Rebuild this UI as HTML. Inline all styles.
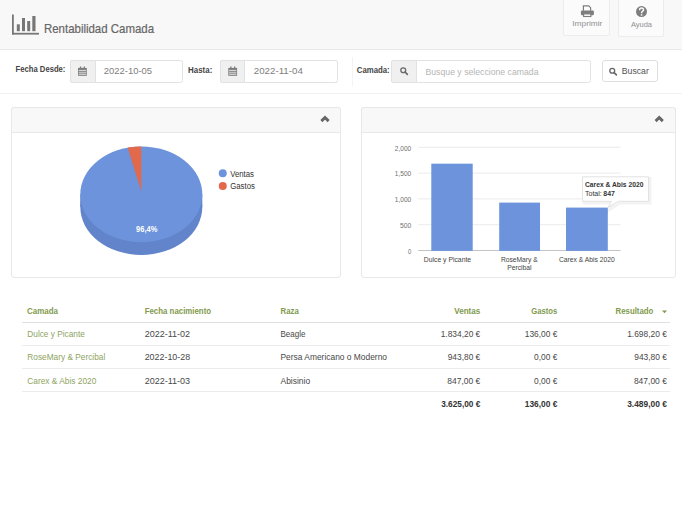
<!DOCTYPE html>
<html><head><meta charset="utf-8"><title>Rentabilidad Camada</title>
<style>
html,body{margin:0;padding:0;background:#fff;width:682px;height:518px;overflow:hidden;font-family:"Liberation Sans", sans-serif;}
#root{position:relative;width:682px;height:518px;overflow:hidden;}
svg{position:absolute;left:0;top:0;}
svg text{font-family:"Liberation Sans", sans-serif;}
</style></head><body><div id="root">
<div style="position:absolute;left:0px;top:0px;width:682px;height:50px;box-sizing:border-box;background:#f8f8f8;border-bottom:1px solid #e8e8e8;"></div>
<div style="position:absolute;left:563px;top:-3px;width:47px;height:39px;box-sizing:border-box;background:#fbfbfb;border:1px solid #ececec;border-radius:2px;"></div>
<div style="position:absolute;left:618px;top:-3px;width:46px;height:40px;box-sizing:border-box;background:#fbfbfb;border:1px solid #ececec;border-radius:2px;"></div>
<div style="position:absolute;left:0px;top:93px;width:682px;height:1px;box-sizing:border-box;background:#f2f2f2;"></div>
<div style="position:absolute;left:70px;top:60px;width:112.5px;height:22.5px;box-sizing:border-box;background:#fff;border:1px solid #e2e2e2;border-radius:2.5px;"></div>
<div style="position:absolute;left:70px;top:60px;width:26px;height:22.5px;box-sizing:border-box;background:#f0f0f0;border:1px solid #e2e2e2;border-radius:2px 0 0 2px;"></div>
<div style="position:absolute;left:220.3px;top:60px;width:117.89999999999998px;height:22.5px;box-sizing:border-box;background:#fff;border:1px solid #e2e2e2;border-radius:2.5px;"></div>
<div style="position:absolute;left:220.3px;top:60px;width:25.2px;height:22.5px;box-sizing:border-box;background:#f0f0f0;border:1px solid #e2e2e2;border-radius:2px 0 0 2px;"></div>
<div style="position:absolute;left:352px;top:57px;width:1px;height:29px;box-sizing:border-box;background:#f3f3f3;"></div>
<div style="position:absolute;left:391.4px;top:60px;width:199.20000000000005px;height:22.5px;box-sizing:border-box;background:#fff;border:1px solid #e2e2e2;border-radius:2.5px;"></div>
<div style="position:absolute;left:391.4px;top:60px;width:25.2px;height:22.5px;box-sizing:border-box;background:#f0f0f0;border:1px solid #e2e2e2;border-radius:2px 0 0 2px;"></div>
<div style="position:absolute;left:601.5px;top:60.2px;width:56px;height:21.8px;box-sizing:border-box;background:#fff;border:1px solid #dedede;border-radius:3px;"></div>
<div style="position:absolute;left:11px;top:107px;width:330px;height:171px;box-sizing:border-box;background:#fff;border:1px solid #e8e8e8;border-radius:3px;"></div>
<div style="position:absolute;left:11px;top:107px;width:330px;height:26px;box-sizing:border-box;background:#f8f8f8;border:1px solid #e8e8e8;border-radius:3px 3px 0 0;"></div>
<div style="position:absolute;left:361px;top:107px;width:314.5px;height:171px;box-sizing:border-box;background:#fff;border:1px solid #e8e8e8;border-radius:3px;"></div>
<div style="position:absolute;left:361px;top:107px;width:314.5px;height:26px;box-sizing:border-box;background:#f8f8f8;border:1px solid #e8e8e8;border-radius:3px 3px 0 0;"></div>
<div style="position:absolute;left:21.6px;top:321.6px;width:648px;height:1.5px;box-sizing:border-box;background:#e0e0e0;"></div>
<div style="position:absolute;left:21.6px;top:344.6px;width:648px;height:1px;box-sizing:border-box;background:#ececec;"></div>
<div style="position:absolute;left:21.6px;top:367.6px;width:648px;height:1px;box-sizing:border-box;background:#ececec;"></div>
<div style="position:absolute;left:21.6px;top:390.6px;width:648px;height:1px;box-sizing:border-box;background:#ececec;"></div>
<svg width="682" height="518" viewBox="0 0 682 518">
<g fill="#777"><rect x="12" y="14.5" width="1.8" height="20"/><rect x="12" y="32.8" width="27" height="1.8"/><rect x="16.8" y="24.3" width="3" height="6.9"/><rect x="22" y="18" width="3" height="13.2"/><rect x="27.2" y="21" width="3" height="10.2"/><rect x="32.3" y="16" width="3.2" height="15.2"/></g>
<g fill="none" stroke="#7d7d7d" stroke-width="1.2"><path d="M583.4 10.8V5.8h5.3l1.9 1.9V10.8"/></g><rect x="580.9" y="10.4" width="13" height="4.9" rx="1.2" fill="#7d7d7d"/><rect x="583.6" y="13.9" width="7.3" height="2.6" fill="#fbfbfb" stroke="#7d7d7d" stroke-width="1.1"/>
<circle cx="641.5" cy="11.6" r="5.5" fill="#7d7d7d"/>
<path d="M639.6 10.2c0-1.4 0.9-2.1 1.9-2.1s2 0.7 2 1.8c0 1.3-1.9 1.5-1.9 2.9v0.4" fill="none" stroke="#fafafa" stroke-width="1.5"/><rect x="640.8" y="14.2" width="1.5" height="1.5" fill="#fafafa"/>
<g fill="#7c7c7c"><rect x="78" y="67.9" width="8.8" height="7.9"/><rect x="79.9" y="66.5" width="1.3" height="2"/><rect x="83.7" y="66.5" width="1.3" height="2"/><g fill="#dedede"><rect x="78.7" y="69.9" width="7.4" height="1"/><rect x="78.7" y="71.8" width="7.4" height="0.9"/><rect x="78.7" y="73.6" width="7.4" height="1.2"/></g></g>
<g fill="#7c7c7c"><rect x="228.3" y="67.9" width="8.8" height="7.9"/><rect x="230.20000000000002" y="66.5" width="1.3" height="2"/><rect x="234.0" y="66.5" width="1.3" height="2"/><g fill="#dedede"><rect x="229.0" y="69.9" width="7.4" height="1"/><rect x="229.0" y="71.8" width="7.4" height="0.9"/><rect x="229.0" y="73.6" width="7.4" height="1.2"/></g></g>
<g fill="none" stroke="#6a6a6a" stroke-width="1.3"><circle cx="403.25" cy="70.25" r="2.45"/><path d="M405.09999999999997 72.10000000000001l2.3 2.3" stroke-linecap="round" stroke-width="1.6"/></g>
<g fill="none" stroke="#666" stroke-width="1.3"><circle cx="612.25" cy="70.75" r="2.45"/><path d="M614.1 72.60000000000001l2.3 2.3" stroke-linecap="round" stroke-width="1.6"/></g>
<path d="M321.4 121.1L325 117.5L328.6 121.1" fill="none" stroke="#666" stroke-width="2.9"/>
<path d="M655.6 121.1L659.2 117.5L662.8000000000001 121.1" fill="none" stroke="#666" stroke-width="2.9"/>
<rect x="80.30000000000001" y="194.3" width="122" height="12.8" fill="#6284cb"/><ellipse cx="141.3" cy="207.10000000000002" rx="61" ry="47.9" fill="#6284cb"/>
<ellipse cx="141.3" cy="194.3" rx="61" ry="47.9" fill="#6c93db"/>
<path d="M141.3 191.3 L141.3 146.4 A61 47.9 0 0 0 127.62 147.62 Z" fill="#e2694b"/>
<circle cx="222.75" cy="173.2" r="4" fill="#6c93db"/><circle cx="222.75" cy="186" r="4" fill="#e2694b"/>
<rect x="418.2" y="250.00" width="202.3" height="1" fill="#c4c4c4"/>
<rect x="418.2" y="224.20" width="202.3" height="1" fill="#ebebeb"/>
<rect x="418.2" y="198.40" width="202.3" height="1" fill="#ebebeb"/>
<rect x="418.2" y="172.60" width="202.3" height="1" fill="#ebebeb"/>
<rect x="418.2" y="146.80" width="202.3" height="1" fill="#ebebeb"/>
<rect x="431.3" y="163.67" width="41.40" height="87.23" fill="#6c93db"/>
<rect x="499.2" y="202.60" width="40.80" height="48.30" fill="#6c93db"/>
<rect x="566" y="207.59" width="41.80" height="43.31" fill="#6c93db"/>
<path d="M583 177.5h66v24.5h-30l-10.5 6.5 3.5-6.5h-29z" fill="none" stroke="#000" stroke-opacity="0.05" stroke-width="3" transform="translate(1 1)"/>
<path d="M582.5 176.8h66v24.5h-30l-10.5 6.2 3.5-6.2h-29z" fill="#ffffff" fill-opacity="0.96" stroke="#e2e2e2" stroke-width="1"/>
<path d="M662 310.6h5l-2.5 2.6z" fill="#819a4e"/>
<text x="44" y="33.2" font-size="13" font-weight="normal" fill="#666666" text-anchor="start" textLength="110" lengthAdjust="spacingAndGlyphs" stroke="#666" stroke-width="0.2">Rentabilidad Camada</text>
<text x="572.3" y="26.2" font-size="8" font-weight="normal" fill="#909090" text-anchor="start" textLength="30" lengthAdjust="spacingAndGlyphs">Imprimir</text>
<text x="631" y="26.6" font-size="8" font-weight="normal" fill="#909090" text-anchor="start" textLength="21" lengthAdjust="spacingAndGlyphs">Ayuda</text>
<text x="15.6" y="71.9" font-size="8.6" font-weight="bold" fill="#444" text-anchor="start" textLength="49.8" lengthAdjust="spacingAndGlyphs">Fecha Desde:</text>
<text x="103.8" y="74.4" font-size="9.6" font-weight="normal" fill="#7e7e7e" text-anchor="start" textLength="48.2" lengthAdjust="spacingAndGlyphs">2022-10-05</text>
<text x="188.1" y="72.6" font-size="8.6" font-weight="bold" fill="#444" text-anchor="start" textLength="24.2" lengthAdjust="spacingAndGlyphs">Hasta:</text>
<text x="253.8" y="74.4" font-size="9.6" font-weight="normal" fill="#7e7e7e" text-anchor="start" textLength="49" lengthAdjust="spacingAndGlyphs">2022-11-04</text>
<text x="356.8" y="73.1" font-size="8.6" font-weight="bold" fill="#444" text-anchor="start" textLength="32.9" lengthAdjust="spacingAndGlyphs">Camada:</text>
<text x="425.5" y="74.6" font-size="9" font-weight="normal" fill="#b5b5b5" text-anchor="start" textLength="113" lengthAdjust="spacingAndGlyphs">Busque y seleccione camada</text>
<text x="621.8" y="74.3" font-size="8.8" font-weight="normal" fill="#505050" text-anchor="start" textLength="27" lengthAdjust="spacingAndGlyphs">Buscar</text>
<text x="136.1" y="232.2" font-size="8.6" font-weight="bold" fill="#ffffff" text-anchor="start" textLength="21.2" lengthAdjust="spacingAndGlyphs">96,4%</text>
<text x="230.2" y="176.7" font-size="8.5" font-weight="normal" fill="#333" text-anchor="start" textLength="23.8" lengthAdjust="spacingAndGlyphs">Ventas</text>
<text x="230.2" y="189.3" font-size="8.5" font-weight="normal" fill="#333" text-anchor="start" textLength="24.7" lengthAdjust="spacingAndGlyphs">Gastos</text>
<text x="411.2" y="253.8" font-size="7.5" font-weight="normal" fill="#707070" text-anchor="end" textLength="3.3" lengthAdjust="spacingAndGlyphs">0</text>
<text x="411.2" y="228.0" font-size="7.5" font-weight="normal" fill="#707070" text-anchor="end" textLength="11.2" lengthAdjust="spacingAndGlyphs">500</text>
<text x="411.2" y="202.20000000000002" font-size="7.5" font-weight="normal" fill="#707070" text-anchor="end" textLength="16.4" lengthAdjust="spacingAndGlyphs">1,000</text>
<text x="411.2" y="176.4" font-size="7.5" font-weight="normal" fill="#707070" text-anchor="end" textLength="16.4" lengthAdjust="spacingAndGlyphs">1,500</text>
<text x="411.2" y="150.60000000000002" font-size="7.5" font-weight="normal" fill="#707070" text-anchor="end" textLength="16.4" lengthAdjust="spacingAndGlyphs">2,000</text>
<text x="423.8" y="262" font-size="7.5" font-weight="normal" fill="#444" text-anchor="start" textLength="47.3" lengthAdjust="spacingAndGlyphs">Dulce y Picante</text>
<text x="500.9" y="262" font-size="7.5" font-weight="normal" fill="#444" text-anchor="start" textLength="36.8" lengthAdjust="spacingAndGlyphs">RoseMary &amp;</text>
<text x="507.3" y="270.2" font-size="7.5" font-weight="normal" fill="#444" text-anchor="start" textLength="24.3" lengthAdjust="spacingAndGlyphs">Percibal</text>
<text x="558.9" y="261.6" font-size="7.5" font-weight="normal" fill="#444" text-anchor="start" textLength="55.9" lengthAdjust="spacingAndGlyphs">Carex &amp; Abis 2020</text>
<text x="585" y="186.9" font-size="7.5" font-weight="bold" fill="#333" text-anchor="start" textLength="58.4" lengthAdjust="spacingAndGlyphs">Carex &amp; Abis 2020</text>
<text x="585" y="195.8" font-size="7.5" font-weight="normal" fill="#333" text-anchor="start" textLength="16.8" lengthAdjust="spacingAndGlyphs">Total:</text>
<text x="603.3" y="195.8" font-size="7.5" font-weight="bold" fill="#333" text-anchor="start" textLength="11.5" lengthAdjust="spacingAndGlyphs">847</text>
<text x="27" y="313.5" font-size="9" font-weight="bold" fill="#819a4e" text-anchor="start" textLength="31" lengthAdjust="spacingAndGlyphs">Camada</text>
<text x="144.7" y="313.5" font-size="9" font-weight="bold" fill="#819a4e" text-anchor="start" textLength="66.4" lengthAdjust="spacingAndGlyphs">Fecha nacimiento</text>
<text x="280.5" y="313.5" font-size="9" font-weight="bold" fill="#819a4e" text-anchor="start" textLength="18.3" lengthAdjust="spacingAndGlyphs">Raza</text>
<text x="480.3" y="313.5" font-size="9" font-weight="bold" fill="#819a4e" text-anchor="end" textLength="26.1" lengthAdjust="spacingAndGlyphs">Ventas</text>
<text x="557.3" y="313.5" font-size="9" font-weight="bold" fill="#819a4e" text-anchor="end" textLength="26.1" lengthAdjust="spacingAndGlyphs">Gastos</text>
<text x="653.4" y="313.5" font-size="9" font-weight="bold" fill="#819a4e" text-anchor="end" textLength="37.9" lengthAdjust="spacingAndGlyphs">Resultado</text>
<text x="27.3" y="337.4" font-size="9" font-weight="normal" fill="#8ea462" text-anchor="start" textLength="57.5" lengthAdjust="spacingAndGlyphs">Dulce y Picante</text>
<text x="144.7" y="337.4" font-size="9" font-weight="normal" fill="#484848" text-anchor="start" textLength="45.4" lengthAdjust="spacingAndGlyphs">2022-11-02</text>
<text x="280.5" y="337.4" font-size="9" font-weight="normal" fill="#484848" text-anchor="start" textLength="25" lengthAdjust="spacingAndGlyphs">Beagle</text>
<text x="480.3" y="337.4" font-size="9" font-weight="normal" fill="#484848" text-anchor="end" textLength="39.6" lengthAdjust="spacingAndGlyphs">1.834,20 €</text>
<text x="557.3" y="337.4" font-size="9" font-weight="normal" fill="#484848" text-anchor="end" textLength="32.5" lengthAdjust="spacingAndGlyphs">136,00 €</text>
<text x="666.9" y="337.4" font-size="9" font-weight="normal" fill="#484848" text-anchor="end" textLength="39.7" lengthAdjust="spacingAndGlyphs">1.698,20 €</text>
<text x="27.3" y="360.45" font-size="9" font-weight="normal" fill="#8ea462" text-anchor="start" textLength="78" lengthAdjust="spacingAndGlyphs">RoseMary &amp; Percibal</text>
<text x="144.7" y="360.45" font-size="9" font-weight="normal" fill="#484848" text-anchor="start" textLength="45.4" lengthAdjust="spacingAndGlyphs">2022-10-28</text>
<text x="280.5" y="360.45" font-size="9" font-weight="normal" fill="#484848" text-anchor="start" textLength="106.5" lengthAdjust="spacingAndGlyphs">Persa Americano o Moderno</text>
<text x="480.3" y="360.45" font-size="9" font-weight="normal" fill="#484848" text-anchor="end" textLength="32.6" lengthAdjust="spacingAndGlyphs">943,80 €</text>
<text x="557.3" y="360.45" font-size="9" font-weight="normal" fill="#484848" text-anchor="end" textLength="23.3" lengthAdjust="spacingAndGlyphs">0,00 €</text>
<text x="666.9" y="360.45" font-size="9" font-weight="normal" fill="#484848" text-anchor="end" textLength="32.6" lengthAdjust="spacingAndGlyphs">943,80 €</text>
<text x="27.3" y="383.5" font-size="9" font-weight="normal" fill="#8ea462" text-anchor="start" textLength="69" lengthAdjust="spacingAndGlyphs">Carex &amp; Abis 2020</text>
<text x="144.7" y="383.5" font-size="9" font-weight="normal" fill="#484848" text-anchor="start" textLength="45.4" lengthAdjust="spacingAndGlyphs">2022-11-03</text>
<text x="280.5" y="383.5" font-size="9" font-weight="normal" fill="#484848" text-anchor="start" textLength="29.7" lengthAdjust="spacingAndGlyphs">Abisinio</text>
<text x="480.3" y="383.5" font-size="9" font-weight="normal" fill="#484848" text-anchor="end" textLength="33" lengthAdjust="spacingAndGlyphs">847,00 €</text>
<text x="557.3" y="383.5" font-size="9" font-weight="normal" fill="#484848" text-anchor="end" textLength="23.3" lengthAdjust="spacingAndGlyphs">0,00 €</text>
<text x="666.9" y="383.5" font-size="9" font-weight="normal" fill="#484848" text-anchor="end" textLength="33" lengthAdjust="spacingAndGlyphs">847,00 €</text>
<text x="480.3" y="406.8" font-size="9" font-weight="bold" fill="#333" text-anchor="end" textLength="39.1" lengthAdjust="spacingAndGlyphs">3.625,00 €</text>
<text x="557.3" y="406.8" font-size="9" font-weight="bold" fill="#333" text-anchor="end" textLength="32.5" lengthAdjust="spacingAndGlyphs">136,00 €</text>
<text x="666.9" y="406.8" font-size="9" font-weight="bold" fill="#333" text-anchor="end" textLength="39.7" lengthAdjust="spacingAndGlyphs">3.489,00 €</text>
</svg>
</div></body></html>
